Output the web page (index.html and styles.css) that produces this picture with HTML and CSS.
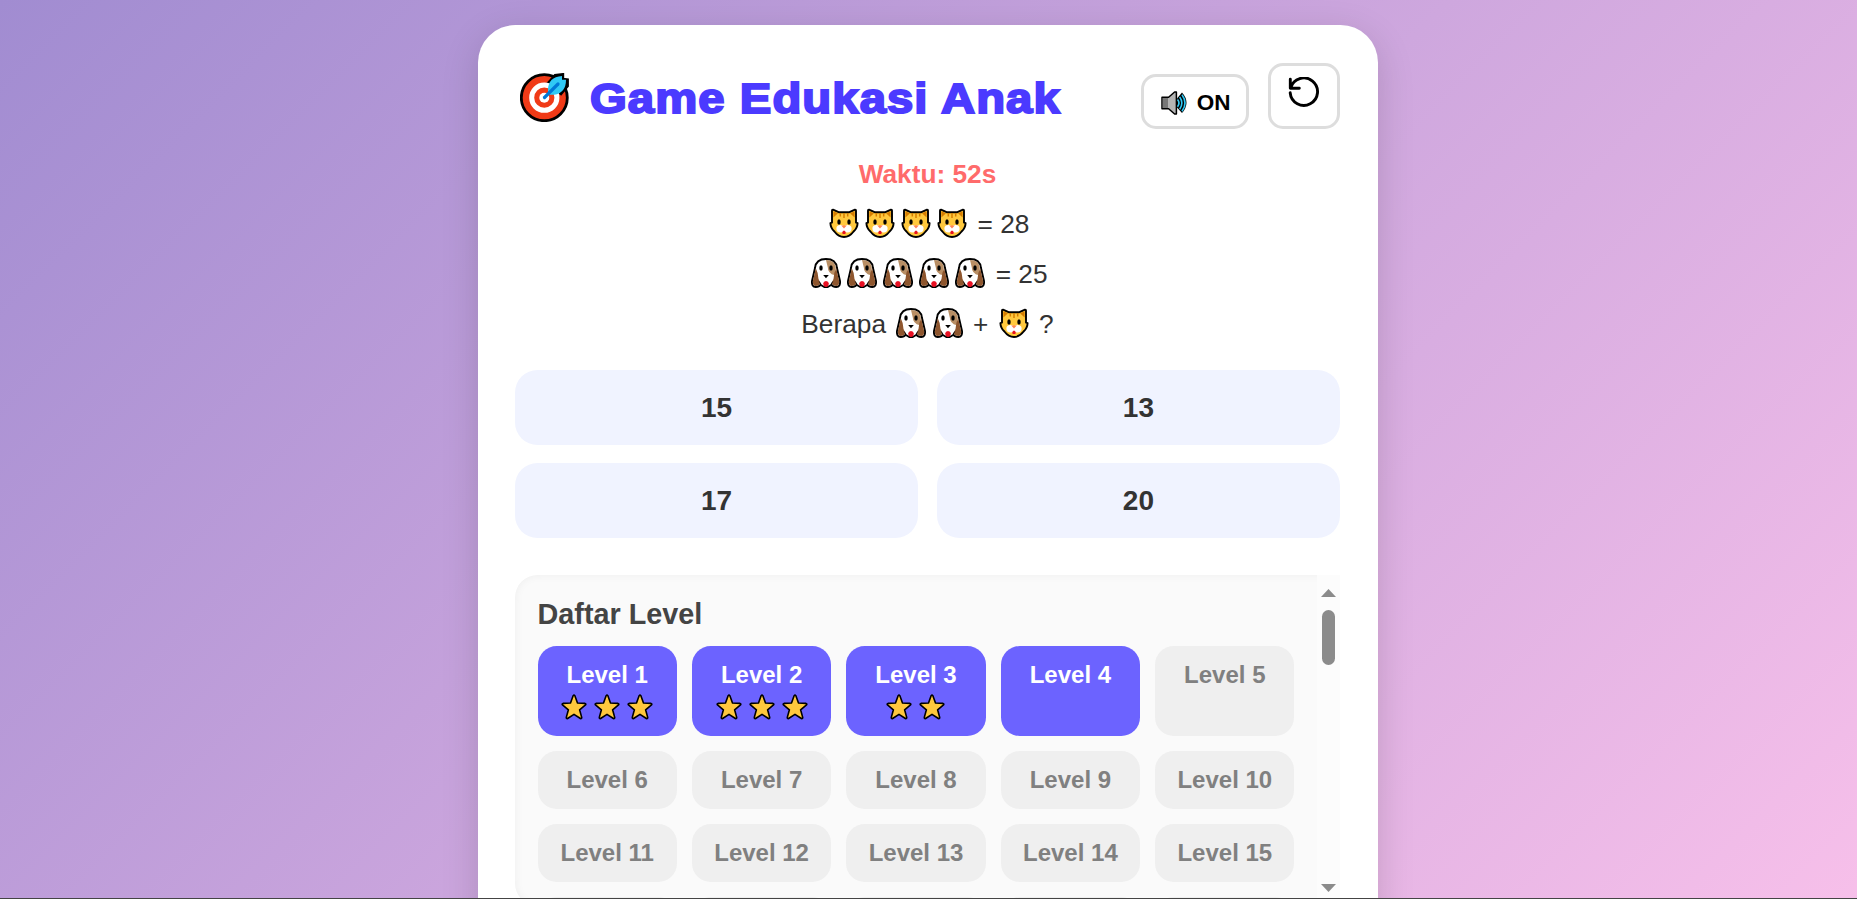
FILE: index.html
```html
<!DOCTYPE html>
<html lang="id">
<head>
<meta charset="utf-8">
<title>Game Edukasi Anak</title>
<link rel="stylesheet" href="styles.css">
</head>
<body>
<svg class="sprite" aria-hidden="true">
  <symbol id="cat" viewBox="0 0 30 30">
    <path d="M4 1.6 9.6 4.2H20.4L26 1.6Q27 1.5 27 3V14.6L28.6 15.2Q28.4 20 24.6 23.5 20.5 29 15 29T5.4 23.5Q1.6 20 1.4 15.2L3 14.6V3Q3 1.5 4 1.6Z" fill="#ffc83d" stroke="#000" stroke-width="1.9" stroke-linejoin="round"/>
    <path d="M4.4 3.3 9 5.3 4.4 9.6ZM25.6 3.3 21 5.3 25.6 9.6Z" fill="#d67d00"/>
    <path d="M11.3 5V8.5M15 5V10M18.7 5V8.5" stroke="#d67d00" stroke-width="1.5"/>
    <ellipse cx="11.4" cy="20.8" rx="4" ry="3.7" fill="#fff"/><ellipse cx="18.6" cy="20.8" rx="4" ry="3.7" fill="#fff"/>
    <ellipse cx="10" cy="14" rx="1.7" ry="2.8"/><ellipse cx="20" cy="14" rx="1.7" ry="2.8"/>
    <path d="M12.2 17.5H17.8L15 20.6Z" fill="#ff8257"/><path d="M13.2 25.2Q13.2 23 15 22.4 16.8 23 16.8 25.2 15 27 13.2 25.2Z" fill="#e81123"/>
  </symbol>
  <symbol id="dog" viewBox="0 0 30 30">
    <path d="M15 1Q25 1 26 10L29 23Q29.6 28.8 25.2 29 21.8 29 20.5 26.8L16.8 29H13.2L9.5 26.8Q8.2 29 4.8 29 .4 28.8 1 23L4 10Q5 1 15 1Z" fill="#fff" stroke="#000" stroke-width="1.9" stroke-linejoin="round"/>
    <path d="M15 1.9Q24.2 2 24.8 10L23.8 17.3Q16.8 15.5 16.8 9.5Z" fill="#b98f65"/>
    <path d="M4.8 10.2Q7.4 15 7.5 21 9.5 24.2 9 26 7.4 28.1 4.8 28.1 1.5 27.8 1.9 23ZM25.2 10.2Q22.6 15 22.5 21 20.5 24.2 21 26 22.6 28.1 25.2 28.1 28.5 27.8 28.1 23Z" fill="#8e562e"/>
    <path d="M8.3 23.5 10 26.2M21.7 23.5 20 26.2" stroke="#000" stroke-width="1"/>
    <ellipse cx="10" cy="10" rx="1.7" ry="2.8"/><ellipse cx="20" cy="10" rx="1.7" ry="2.8"/>
    <path d="M12.2 17H17.8L15 20.2Z"/><path d="M12.2 25.5Q12.4 23 15 22.9 17.6 23 17.8 25.5 17.5 29 15 29T12.2 25.5Z" fill="#e81123"/>
  </symbol>
  <symbol id="star" viewBox="0 0 26 26">
    <path d="M12.2 1.6Q13 .4 13.8 1.6L16.5 9 24 9.4Q25.4 9.8 24.5 10.9L18.6 15.8 20.7 23.4Q20.7 25 19.4 24.5L13 20.3 6.6 24.5Q5.3 25 5.3 23.4L7.4 15.8 1.5 10.9Q.6 9.8 2 9.4L9.5 9Z" fill="#ffc83d" stroke="#000" stroke-width="1.6" stroke-linejoin="round"/>
  </symbol>
</svg>
<div class="page">
  <main class="card">
    <header class="header">
      <h1 class="title">
        <svg class="target" viewBox="0 0 49 49"><circle cx="24.3" cy="24.7" r="23" fill="#f03a17" stroke="#000" stroke-width="2.8"/><path d="M28 10 35 2.2 43 1.2V6L47.7 6.5V13L41 21Z" stroke="#000" stroke-width="2.4"/><circle cx="24.3" cy="24.7" r="12.6" fill="none" stroke="#fff" stroke-width="5"/><circle cx="24.3" cy="24.7" r="5" fill="#fff"/><path d="M28 17Q28 4 42 3V6.7H46Q46 20 34 21.7H28Z" fill="#30c9f5"/><path d="M24.5 24.5 38 11" stroke="#0078d7" stroke-width="3.2" stroke-linecap="round"/></svg>
        <span class="title-text">Game Edukasi Anak</span>
      </h1>
      <div class="actions">
        <button class="btn sound"><svg class="speaker" viewBox="0 0 27 24"><path d="M1 6.3H7.6L13.6 1H15.4V23H13.6L7.6 17.8H1Z" fill="#b4b4b4" stroke="#000" stroke-width="1.5" stroke-linejoin="round"/><path d="M1.7 7H7V17H1.7Z" fill="#777"/><path d="M16 7.5 21 1.5Q30 11.5 21 22L16 16.5Z" fill="#000"/><path d="M16.5 8.5Q19.5 12 16.5 15.8M18.7 6Q23 12 18.7 18.2M21 3.7Q27 12 21 20.2" fill="none" stroke="#30c9f5" stroke-width="1.6"/></svg><span>ON</span></button>
        <button class="btn reset" aria-label="Ulangi"><svg class="undo" viewBox="0 0 32 32"><path d="M2.3 2.3V11.2H11.3M2.7 10.8A13.7 13.7 0 1 1 2.2 15.8" fill="none" stroke="#000" stroke-width="2.9" stroke-linecap="round" stroke-linejoin="round"/></svg></button>
      </div>
    </header>
    <section class="quiz">
      <p class="timer">Waktu: 52s</p>
      <p class="line"><svg class="em"><use href="#cat"/></svg><svg class="em"><use href="#cat"/></svg><svg class="em"><use href="#cat"/></svg><svg class="em"><use href="#cat"/></svg> = 28</p>
      <p class="line"><svg class="em"><use href="#dog"/></svg><svg class="em"><use href="#dog"/></svg><svg class="em"><use href="#dog"/></svg><svg class="em"><use href="#dog"/></svg><svg class="em"><use href="#dog"/></svg> = 25</p>
      <p class="line">Berapa <svg class="em"><use href="#dog"/></svg><svg class="em"><use href="#dog"/></svg> + <svg class="em"><use href="#cat"/></svg> ?</p>
    </section>
    <section class="answers">
      <button class="answer">15</button><button class="answer">13</button>
      <button class="answer">17</button><button class="answer">20</button>
    </section>
    <section class="levels">
      <div class="levels-body">
        <h2 class="levels-title">Daftar Level</h2>
        <div class="grid">
          <div class="level open">Level 1<div class="stars"><svg class="star"><use href="#star"/></svg><svg class="star"><use href="#star"/></svg><svg class="star"><use href="#star"/></svg></div></div>
          <div class="level open">Level 2<div class="stars"><svg class="star"><use href="#star"/></svg><svg class="star"><use href="#star"/></svg><svg class="star"><use href="#star"/></svg></div></div>
          <div class="level open">Level 3<div class="stars"><svg class="star"><use href="#star"/></svg><svg class="star"><use href="#star"/></svg></div></div>
          <div class="level open">Level 4</div>
          <div class="level">Level 5</div>
          <div class="level">Level 6</div><div class="level">Level 7</div><div class="level">Level 8</div><div class="level">Level 9</div><div class="level">Level 10</div>
          <div class="level">Level 11</div><div class="level">Level 12</div><div class="level">Level 13</div><div class="level">Level 14</div><div class="level">Level 15</div>
          <div class="level"></div><div class="level"></div><div class="level"></div><div class="level"></div><div class="level"></div>
        </div>
      </div>
      <div class="scrollbar">
        <svg class="arrow" viewBox="0 0 15 8"><path d="M0 8 7.5 0 15 8Z" fill="#8b8b8b"/></svg>
        <div class="thumb"></div>
        <svg class="arrow down" viewBox="0 0 15 8"><path d="M0 0H15L7.5 8Z" fill="#8b8b8b"/></svg>
      </div>
    </section>
  </main>
</div>
</body>
</html>
```
FILE: styles.css
```css
* { box-sizing: border-box; }
body { margin: 0; font-family: "Liberation Sans", Arial, sans-serif; color: #333; }
.sprite { position: absolute; width: 0; height: 0; }
.page { height: 899px; overflow: hidden; padding: 25px 1px 0 0; background: linear-gradient(135deg, #a18cd1, #fbc2eb) 0 0 / 100% 1044px no-repeat; border-bottom: 1px solid #444; }
.card { width: 900px; height: 1000px; margin: 0 auto; padding: 38px 38px 38px 37px; background: #fff; border-radius: 37.5px; box-shadow: 0 10px 37px rgba(0, 0, 0, .15); }
.header { display: flex; justify-content: space-between; height: 66px; }
.title { display: flex; align-items: flex-start; margin: 0; padding: 10px 0 0 5px; }
.target { width: 49px; height: 49px; flex: none; }
.title-text { margin-left: 20.5px; font: bold 43px/50px "Liberation Sans", Arial, sans-serif; letter-spacing: .95px; color: #4b3aff; white-space: nowrap; -webkit-text-stroke: 2px #4b3aff; transform: scaleX(1.1); transform-origin: left; }
.actions { display: flex; align-items: flex-end; gap: 19px; }
.btn { display: flex; align-items: center; justify-content: center; padding: 0; background: #fff; border: 3px solid #ddd; border-radius: 15px; font: bold 22.5px "Liberation Sans", Arial, sans-serif; color: #000; }
.sound { width: 108px; height: 55px; gap: 9px; padding: 2px 0 0 1px; }
.speaker { width: 27px; height: 24px; }
.reset { width: 72px; height: 66px; padding-bottom: 6px; }
.undo { width: 32px; height: 32px; }
.quiz { padding-top: 20px; text-align: center; }
.quiz p { margin: 0; height: 50px; line-height: 50px; font-size: 26.25px; white-space: nowrap; }
.quiz .timer { font-weight: bold; color: #ff6b6b; }
.em { width: 30px; height: 30px; margin: 0 3.1px; vertical-align: -5px; }
.answers { display: grid; grid-template-columns: 1fr 1fr; gap: 18px 18.75px; margin-top: 21px; }
.answer { height: 75px; padding: 0; border: 0; border-radius: 22.5px; background: #f0f3ff; color: #333; font: bold 28px "Liberation Sans", Arial, sans-serif; }
.levels { display: flex; height: 331px; margin-top: 37px; border-radius: 22.5px 0 0 22.5px; background: #fafafa; overflow: hidden; box-shadow: inset 0 0 10px rgba(0, 0, 0, .05); }
.levels-body { flex: 1; padding: 21px 22.5px; }
.levels-title { margin: 0 0 14px; font-size: 28.8px; line-height: 36px; color: #444; }
.grid { display: grid; grid-template-columns: repeat(5, 1fr); grid-template-rows: 90px 58px 58px 58px; gap: 15px; }
.level { padding-top: 15px; border-radius: 18.75px; background: #efefef; color: #808080; text-align: center; font-size: 24px; font-weight: bold; line-height: 27px; }
.level.open { background: #6c63ff; color: #fff; }
.stars { display: flex; justify-content: center; gap: 7px; padding-top: 6px; }
.star { width: 26px; height: 26px; }
.scrollbar { width: 23px; display: flex; flex-direction: column; align-items: center; padding: 14px 0; background: #fcfcfc; }
.arrow { width: 15px; height: 8px; }
.thumb { width: 13px; height: 55px; margin-top: 13px; border-radius: 7px; background: #8b8b8b; }
.down { margin-top: auto; }
```
